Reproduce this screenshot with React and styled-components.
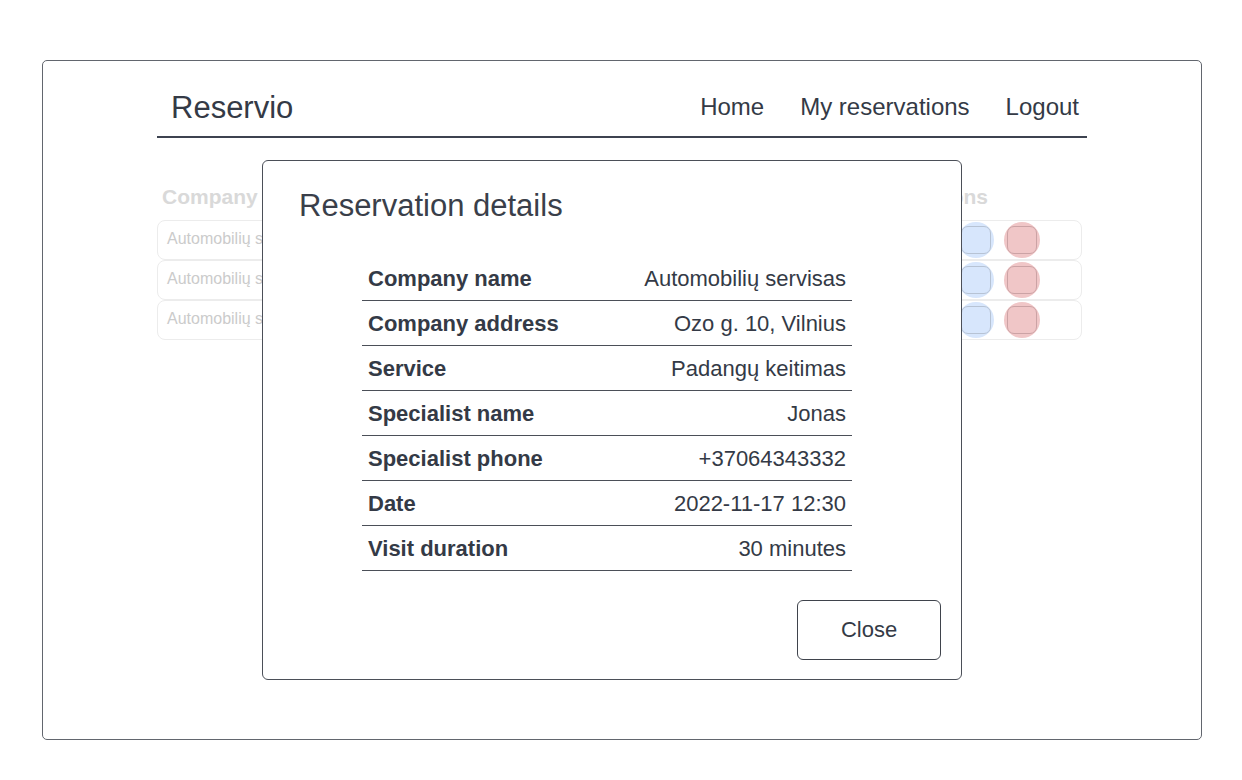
import styled, { createGlobalStyle } from "styled-components";

const GlobalStyle = createGlobalStyle`
  body {
    margin: 0;
    background: #ffffff;
    font-family: "Liberation Sans", Arial, sans-serif;
    color: #343a46;
  }
`;

const Page = styled.div`
  padding: 60px 40px 40px 42px;
`;

const Frame = styled.div`
  position: relative;
  width: 930px;
  height: 678px;
  padding: 0 114px;
  border: 1px solid #62666e;
  border-radius: 5px;
`;

const Header = styled.header`
  display: flex;
  justify-content: space-between;
  align-items: flex-end;
  padding: 29px 8px 10px 14px;
  border-bottom: 2px solid #3d4350;
`;

const Brand = styled.div`
  font-size: 31px;
  line-height: 36px;
  color: #343a46;
`;

const Nav = styled.nav`
  display: flex;
  gap: 36px;
  margin-bottom: 5px;
`;

const NavLink = styled.a`
  font-size: 24px;
  line-height: 28px;
  color: #343a46;
  text-decoration: none;
`;

const Listing = styled.section`
  margin-top: 47px;
  width: 925px;
`;

const HeadRow = styled.div`
  display: grid;
  grid-template-columns: 1fr 166px;
  padding: 0 5px;
  margin-bottom: 11px;
`;

const HeadCell = styled.div`
  font-size: 21px;
  line-height: 24px;
  font-weight: 700;
  color: #d9d9d9;
`;

const Row = styled.div`
  display: grid;
  grid-template-columns: 1fr 166px;
  align-items: center;
  height: 38px;
  padding: 0 9px;
  border: 1px solid #ececec;
  border-radius: 8px;
`;

const Cell = styled.div`
  font-size: 16px;
  line-height: 20px;
  margin-top: -2px;
  color: #cbcbcb;
  white-space: nowrap;
`;

const Actions = styled.div`
  display: flex;
  gap: 10px;
  padding-left: 52px;
`;

const RoundButton = styled.div`
  width: 36px;
  height: 36px;
  border-radius: 50%;
  background: ${(p) => (p.$danger ? "#f0c6c7" : "#d7e6fc")};
  display: flex;
  align-items: center;
  justify-content: center;

  &::after {
    content: "";
    width: 30px;
    height: 28px;
    border-radius: 7px;
    border: 1px solid ${(p) => (p.$danger ? "#cba3a5" : "#b7c3d4")};
    box-sizing: border-box;
  }
`;

const Modal = styled.div`
  position: absolute;
  left: 219px;
  top: 99px;
  width: 700px;
  box-sizing: border-box;
  padding: 27px 20px 19px 36px;
  display: flex;
  flex-direction: column;
  background: #ffffff;
  border: 1px solid #4b4f58;
  border-radius: 6px;
`;

const Title = styled.h2`
  margin: 0;
  font-size: 31px;
  line-height: 36px;
  font-weight: 400;
  color: #3a3f4a;
`;

const Details = styled.div`
  width: 490px;
  margin: 32px 0 0 63px;
`;

const DetailRow = styled.div`
  display: flex;
  justify-content: space-between;
  align-items: center;
  height: 45px;
  padding: 2px 6px 0;
  box-sizing: border-box;
  border-bottom: 1px solid #4b4f58;
  font-size: 22px;
  color: #343a46;
`;

const Label = styled.span`
  font-weight: 700;
`;

const Value = styled.span`
  font-weight: 400;
`;

const Footer = styled.div`
  display: flex;
  justify-content: flex-end;
  margin-top: 29px;
`;

const CloseButton = styled.button`
  width: 144px;
  height: 60px;
  background: #ffffff;
  border: 1px solid #3f434c;
  border-radius: 6px;
  font-family: "Liberation Sans", Arial, sans-serif;
  font-size: 22px;
  color: #343a46;
  cursor: pointer;
`;

const reservations = ["Automobilių servisas", "Automobilių servisas", "Automobilių servisas"];

const details = [
  ["Company name", "Automobilių servisas"],
  ["Company address", "Ozo g. 10, Vilnius"],
  ["Service", "Padangų keitimas"],
  ["Specialist name", "Jonas"],
  ["Specialist phone", "+37064343332"],
  ["Date", "2022-11-17 12:30"],
  ["Visit duration", "30 minutes"],
];

const App = () => {
  return (
    <>
      <GlobalStyle />
      <Page>
        <Frame>
          <Header>
            <Brand>Reservio</Brand>
            <Nav>
              <NavLink href="#">Home</NavLink>
              <NavLink href="#">My reservations</NavLink>
              <NavLink href="#">Logout</NavLink>
            </Nav>
          </Header>

          <Listing>
            <HeadRow>
              <HeadCell>Company</HeadCell>
              <HeadCell>Actions</HeadCell>
            </HeadRow>
            {reservations.map((company, i) => (
              <Row key={i}>
                <Cell>{company}</Cell>
                <Actions>
                  <RoundButton />
                  <RoundButton $danger />
                </Actions>
              </Row>
            ))}
          </Listing>

          <Modal>
            <Title>Reservation details</Title>
            <Details>
              {details.map(([label, value]) => (
                <DetailRow key={label}>
                  <Label>{label}</Label>
                  <Value>{value}</Value>
                </DetailRow>
              ))}
            </Details>
            <Footer>
              <CloseButton>Close</CloseButton>
            </Footer>
          </Modal>
        </Frame>
      </Page>
    </>
  );
};

export default App;
